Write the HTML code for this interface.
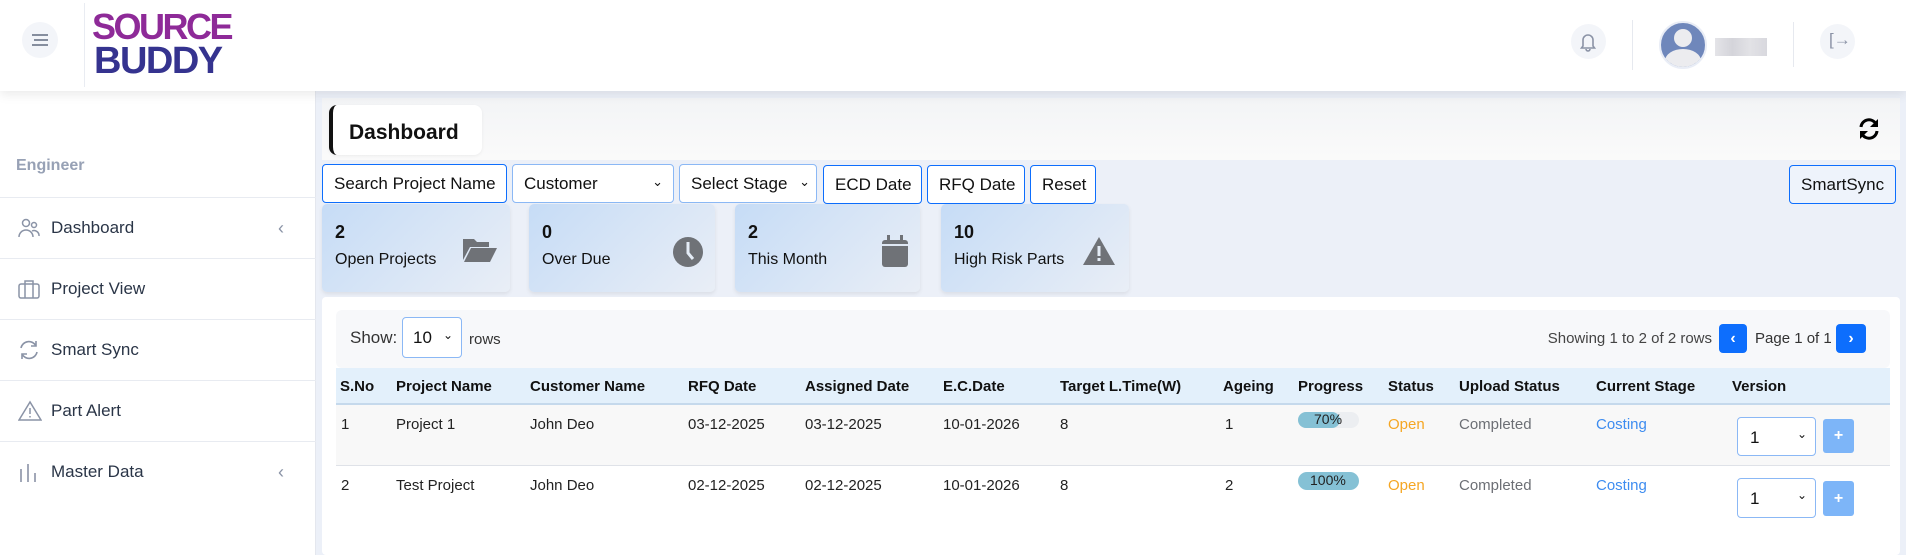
<!DOCTYPE html>
<html><head><meta charset="utf-8"><style>
*{box-sizing:border-box;margin:0;padding:0}
body{width:1906px;height:555px;overflow:hidden;background:#ecf0f8;font-family:"Liberation Sans",sans-serif;position:relative;color:#111}
.a{position:absolute}
.hdr{left:0;top:0;width:1906px;height:91px;background:#fff;box-shadow:0 4px 10px rgba(0,0,0,.08);z-index:3}
.circ{border-radius:50%;background:#f3f5f9}
.side{left:0;top:91px;width:316px;height:464px;background:#fff;border-right:1px solid #e4e7ee}
.mi{left:0;width:316px;height:61px;border-top:1px solid #e8ebf1;font-size:17px;color:#2a3547;display:flex;align-items:center}
.mi svg{position:absolute;left:18px}
.mi span{position:absolute;left:51px}
.mi i{position:absolute;left:278px;font-style:normal;color:#8a93a6;font-size:18px}
.btn{height:39px;border:1px solid #0d6efd;border-radius:4px;background:#fff;font-size:17px;display:flex;align-items:center;padding-left:11px;color:#111}
.sel{border-color:#8bb8f5}
.card{top:204px;height:88px;border-radius:5px;background:linear-gradient(135deg,#c6dcf6,#e9eef6);box-shadow:0 2px 4px rgba(0,0,0,.08)}
.card b{position:absolute;left:13px;top:18px;font-size:18px}
.card span{position:absolute;left:13px;top:47px;font-size:16px}
.card svg{position:absolute;top:32px}
.th{top:368px;height:37px;font-weight:bold;font-size:15px;line-height:37px}
.td{font-size:15px;color:#222}
</style></head><body>
<div class="a hdr">
 <div class="a circ" style="left:22px;top:22px;width:36px;height:36px"></div>
 <svg class="a" style="left:30px;top:33px" width="20" height="14"><g stroke="#6b7486" stroke-width="1.6"><line x1="2" y1="2" x2="18" y2="2"/><line x1="4" y1="7" x2="18" y2="7"/><line x1="2" y1="12" x2="18" y2="12"/></g></svg>
 <div class="a" style="left:84px;top:3px;width:1px;height:84px;background:#e9ecf2"></div>
 <div class="a" style="left:92px;top:9px;font:bold 36px/35px 'Liberation Sans',sans-serif;color:#8e2a98;letter-spacing:-2.5px">SOURCE</div>
 <div class="a" style="left:94px;top:42px;font:bold 38px/38px 'Liberation Sans',sans-serif;color:#35338f;letter-spacing:-1.5px">BUDDY</div>
 <div class="a circ" style="left:1571px;top:24px;width:35px;height:35px"></div>
 <svg class="a" style="left:1579px;top:32px" width="18" height="20"><path d="M4 14V8a5 5 0 0110 0v6l1.5 2h-13zM7 17a2 2 0 004 0" fill="none" stroke="#8b93a6" stroke-width="1.6"/></svg>
 <div class="a" style="left:1632px;top:20px;width:1px;height:50px;background:#e6e9ef"></div>
 <div class="a" style="left:1659px;top:21px;width:48px;height:48px;border-radius:50%;background:#6f87bb;overflow:hidden;border:2px solid #e9edf6">
  <div class="a" style="left:13px;top:6px;width:18px;height:18px;border-radius:50%;background:#ececef"></div>
  <div class="a" style="left:4px;top:26px;width:36px;height:24px;border-radius:50%;background:#ececef"></div>
 </div>
 <div class="a" style="left:1715px;top:38px;width:52px;height:18px;background:linear-gradient(90deg,#e4e4e8,#d4d4da,#e2e2e6,#d8d8de)"></div>
 <div class="a" style="left:1793px;top:22px;width:1px;height:45px;background:#e6e9ef"></div>
 <div class="a circ" style="left:1820px;top:24px;width:35px;height:35px"></div>
 <div class="a" style="left:1829px;top:30px;font-size:17px;color:#8b93a6">[→</div>
</div>
<div class="a side">
 <div class="a" style="left:16px;top:66px;font-size:16px;font-weight:bold;color:#97a1b5">Engineer</div>
 <div class="a mi" style="top:106px"><svg width="22" height="22"><g fill="none" stroke="#8a93a6" stroke-width="1.5"><circle cx="8" cy="6" r="3.5"/><circle cx="16" cy="8" r="2.5"/><path d="M1 20a7 7 0 0114 0M14 14a5 5 0 017 5"/></g></svg><span>Dashboard</span><i>‹</i></div>
 <div class="a mi" style="top:167px"><svg width="22" height="22"><g fill="none" stroke="#8a93a6" stroke-width="1.5"><rect x="1" y="6" width="20" height="14" rx="2"/><path d="M7 6V3h8v3M7 6v14M15 6v14"/></g></svg><span>Project View</span></div>
 <div class="a mi" style="top:228px"><svg width="22" height="22"><g fill="none" stroke="#8a93a6" stroke-width="1.6"><path d="M3 9a8 8 0 0115-2M19 13a8 8 0 01-15 2"/><path d="M18 2v5h-5M4 20v-5h5"/></g></svg><span>Smart Sync</span></div>
 <div class="a mi" style="top:289px"><svg width="24" height="22"><g fill="none" stroke="#8a93a6" stroke-width="1.5"><path d="M12 2L1 20h22z"/><path d="M12 8v6M12 16v1.5"/></g></svg><span>Part Alert</span></div>
 <div class="a mi" style="top:350px"><svg width="22" height="22"><g stroke="#8a93a6" stroke-width="1.6"><line x1="3" y1="8" x2="3" y2="21"/><line x1="10" y1="3" x2="10" y2="21"/><line x1="17" y1="12" x2="17" y2="21"/></g></svg><span>Master Data</span><i>‹</i></div>
</div>
<div class="a" style="left:322px;top:98px;width:1578px;height:62px;background:linear-gradient(#f3f4f6,#fafafa)"></div>
<div class="a" style="left:329px;top:105px;width:153px;height:50px;background:#fff;border-left:4px solid #111;border-radius:8px;box-shadow:0 1px 3px rgba(0,0,0,.06)"></div>
<div class="a" style="left:349px;top:121px;font-size:21px;font-weight:bold;color:#111">Dashboard</div>
<svg class="a" style="left:1857px;top:117px" width="24" height="24"><g fill="none" stroke="#000" stroke-width="3"><path d="M4 10a8 8 0 0115-3M20 14a8 8 0 01-15 3"/></g><path d="M21 2v8h-8z M3 22v-8h8z" fill="#000"/></svg>
<div class="a btn" style="left:322px;top:164px;width:185px">Search Project Name</div>
<div class="a btn sel" style="left:512px;top:164px;width:162px">Customer<span class="a" style="right:10px;top:9px;font-size:13px">⌄</span></div>
<div class="a btn sel" style="left:679px;top:164px;width:138px">Select Stage<span class="a" style="right:6px;top:9px;font-size:13px">⌄</span></div>
<div class="a btn" style="left:823px;top:165px;width:99px">ECD Date</div>
<div class="a btn" style="left:927px;top:165px;width:98px">RFQ Date</div>
<div class="a btn" style="left:1030px;top:165px;width:66px">Reset</div>
<div class="a btn" style="left:1789px;top:165px;width:107px;background:#eef3fb">SmartSync</div>
<div class="a card" style="left:322px;width:188px"><b>2</b><span>Open Projects</span><svg style="left:140px" width="36" height="28"><path d="M1 3h11l3 3h12v5H8L1 24z M9 12h26l-7 14H2z" fill="#6f7277"/></svg></div>
<div class="a card" style="left:529px;width:186px"><b>0</b><span>Over Due</span><svg style="left:143px" width="32" height="32"><circle cx="16" cy="16" r="15" fill="#6f7277"/><path d="M16 6v11l5 6" stroke="#e4ecf6" stroke-width="3" fill="none"/></svg></div>
<div class="a card" style="left:735px;width:185px"><b>2</b><span>This Month</span><svg style="left:146px;top:30px" width="28" height="34"><rect x="1" y="6" width="26" height="27" rx="3" fill="#6f7277"/><rect x="6" y="1" width="3" height="7" fill="#6f7277"/><rect x="19" y="1" width="3" height="7" fill="#6f7277"/><rect x="1" y="10" width="26" height="2" fill="#dfe8f4"/></svg></div>
<div class="a card" style="left:941px;width:188px"><b>10</b><span>High Risk Parts</span><svg style="left:141px" width="34" height="30"><path d="M17 1L33 29H1z" fill="#6f7277"/><rect x="15.5" y="10" width="3" height="10" fill="#e4ecf6"/><rect x="15.5" y="22" width="3" height="3" fill="#e4ecf6"/></svg></div>
<div class="a" style="left:322px;top:297px;width:1578px;height:258px;background:#fff;border-radius:4px"></div>
<div class="a" style="left:336px;top:310px;width:1554px;height:58px;background:#f7f8fa;border-radius:6px"></div>
<div class="a" style="left:350px;top:328px;font-size:17px;color:#333">Show:</div>
<div class="a" style="left:402px;top:317px;width:60px;height:41px;border:1px solid #8bb8f5;border-radius:4px;background:#fff;font-size:17px;padding:10px 0 0 10px">10<span class="a" style="right:8px;top:10px;font-size:12px">⌄</span></div>
<div class="a" style="left:469px;top:331px;font-size:15px;color:#333">rows</div>
<div class="a" style="left:1500px;top:330px;width:212px;font-size:15px;color:#444;white-space:nowrap;text-align:right">Showing 1 to 2 of 2 rows</div>
<div class="a" style="left:1719px;top:324px;width:28px;height:29px;background:#0d6efd;border-radius:4px;color:#fff;text-align:center;line-height:29px;font-weight:bold">‹</div>
<div class="a" style="left:1755px;top:330px;font-size:15px;color:#333">Page 1 of 1</div>
<div class="a" style="left:1836px;top:324px;width:30px;height:29px;background:#0d6efd;border-radius:4px;color:#fff;text-align:center;line-height:29px;font-weight:bold">›</div>
<div class="a" style="left:336px;top:368px;width:1554px;height:37px;background:#e3f0fb;border-bottom:2px solid #c5d9ec"></div>
<div class="a" style="left:336px;top:405px;width:1554px;height:61px;background:#f8f8f8;border-bottom:1px solid #dfe2e8"></div>
<div class="a th" style="left:340px">S.No</div><div class="a th" style="left:396px">Project Name</div><div class="a th" style="left:530px">Customer Name</div><div class="a th" style="left:688px">RFQ Date</div><div class="a th" style="left:805px">Assigned Date</div><div class="a th" style="left:943px">E.C.Date</div><div class="a th" style="left:1060px">Target L.Time(W)</div><div class="a th" style="left:1223px">Ageing</div><div class="a th" style="left:1298px">Progress</div><div class="a th" style="left:1388px">Status</div><div class="a th" style="left:1459px">Upload Status</div><div class="a th" style="left:1596px">Current Stage</div><div class="a th" style="left:1732px">Version</div>
<div class="a td" style="left:341px;top:416px">1</div><div class="a td" style="left:396px;top:416px">Project 1</div><div class="a td" style="left:530px;top:416px">John Deo</div><div class="a td" style="left:688px;top:416px">03-12-2025</div><div class="a td" style="left:805px;top:416px">03-12-2025</div><div class="a td" style="left:943px;top:416px">10-01-2026</div><div class="a td" style="left:1060px;top:416px">8</div><div class="a td" style="left:1225px;top:416px">1</div>
<div class="a" style="left:1298px;top:412px;width:61px;height:16px;border-radius:8px;background:#eceef1"><div style="width:42px;height:16px;border-radius:8px;background:#85c1d5"></div></div><div class="a td" style="left:1314px;top:411px;font-size:14px">70%</div>
<div class="a td" style="left:1388px;top:416px;color:#f5a623">Open</div><div class="a td" style="left:1459px;top:416px;color:#6c6f75">Completed</div><div class="a td" style="left:1596px;top:416px;color:#3d8cf0">Costing</div>
<div class="a" style="left:1737px;top:417px;width:79px;height:39px;border:1px solid #8bb8f5;border-radius:4px;background:#fff;font-size:17px;padding:10px 0 0 12px">1<span class="a" style="right:8px;top:9px;font-size:12px">⌄</span></div>
<div class="a" style="left:1823px;top:419px;width:31px;height:34px;background:#7db5f8;border-radius:3px;color:#fff;text-align:center;line-height:34px;font-weight:bold">+</div>
<div class="a td" style="left:341px;top:477px">2</div><div class="a td" style="left:396px;top:477px">Test Project</div><div class="a td" style="left:530px;top:477px">John Deo</div><div class="a td" style="left:688px;top:477px">02-12-2025</div><div class="a td" style="left:805px;top:477px">02-12-2025</div><div class="a td" style="left:943px;top:477px">10-01-2026</div><div class="a td" style="left:1060px;top:477px">8</div><div class="a td" style="left:1225px;top:477px">2</div>
<div class="a" style="left:1298px;top:472px;width:61px;height:18px;border-radius:9px;background:#85c1d5"></div><div class="a td" style="left:1310px;top:472px;font-size:14px">100%</div>
<div class="a td" style="left:1388px;top:477px;color:#f5a623">Open</div><div class="a td" style="left:1459px;top:477px;color:#6c6f75">Completed</div><div class="a td" style="left:1596px;top:477px;color:#3d8cf0">Costing</div>
<div class="a" style="left:1737px;top:478px;width:79px;height:40px;border:1px solid #8bb8f5;border-radius:4px;background:#fff;font-size:17px;padding:10px 0 0 12px">1<span class="a" style="right:8px;top:9px;font-size:12px">⌄</span></div>
<div class="a" style="left:1823px;top:481px;width:31px;height:35px;background:#7db5f8;border-radius:3px;color:#fff;text-align:center;line-height:35px;font-weight:bold">+</div>
</body></html>
